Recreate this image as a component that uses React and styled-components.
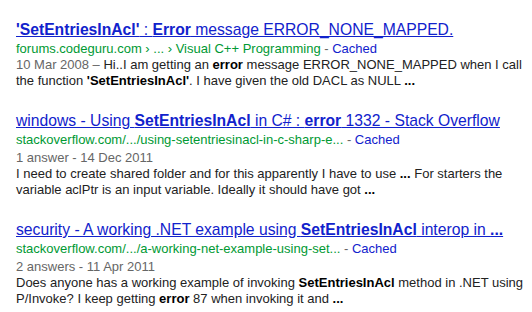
import styled, { createGlobalStyle } from "styled-components";

const GlobalStyle = createGlobalStyle`
    body {
        margin: 0;
        background: #ffffff;
        font-family: "Liberation Sans", Arial, sans-serif;
    }
`

const results = [
    {
        title: [["'SetEntriesInAcl'", true], [" : ", false], ["Error", true], [" message ERROR_NONE_MAPPED.", false]],
        url: "forums.codeguru.com › ... › Visual C++ Programming",
        date: "10 Mar 2008 – ",
        lines: [
            [["Hi..I am getting an ", false], ["error", true], [" message ERROR_NONE_MAPPED when I call", false]],
            [["the function ", false], ["'SetEntriesInAcl'", true], [". I have given the old DACL as NULL ", false], ["...", true]],
        ],
    },
    {
        title: [["windows - Using ", false], ["SetEntriesInAcl", true], [" in C# : ", false], ["error", true], [" 1332 - Stack Overflow", false]],
        url: "stackoverflow.com/.../using-setentriesinacl-in-c-sharp-e...",
        meta: "1 answer - 14 Dec 2011",
        lines: [
            [["I need to create shared folder and for this apparently I have to use ", false], ["...", true], [" For starters the", false]],
            [["variable aclPtr is an input variable. Ideally it should have got ", false], ["...", true]],
        ],
    },
    {
        title: [["security - A working .NET example using ", false], ["SetEntriesInAcl", true], [" interop in ", false], ["...", true]],
        url: "stackoverflow.com/.../a-working-net-example-using-set...",
        meta: "2 answers - 11 Apr 2011",
        lines: [
            [["Does anyone has a working example of invoking ", false], ["SetEntriesInAcl", true], [" method in .NET using", false]],
            [["P/Invoke? I keep getting ", false], ["error", true], [" 87 when invoking it and ", false], ["...", true]],
        ],
    },
]

const renderParts = (parts) =>
    parts.map(([text, bold], index) => (bold ? <b key={index}>{text}</b> : <span key={index}>{text}</span>))

const App = () => {
    return (
        <>
            <GlobalStyle />
            <ResultList>
                {
                    results.map((result, index) => (
                        <Result key={index}>
                            <Title href="#">{renderParts(result.title)}</Title>
                            <UrlLine>
                                <Url>{result.url}</Url>
                                <Separator> - </Separator>
                                <Cached href="#">Cached</Cached>
                            </UrlLine>
                            {result.meta && <Meta>{result.meta}</Meta>}
                            <Snippet>
                                {result.date && <DateText>{result.date}</DateText>}
                                {renderParts(result.lines[0])}
                                <br />
                                {renderParts(result.lines[1])}
                            </Snippet>
                        </Result>
                    ))
                }
            </ResultList>
        </>
    );
};

const ResultList = styled.ol`
    list-style: none;
    margin: 0;
    padding: 20px 0 0 16px;
    display: flex;
    flex-direction: column;
    gap: 22px;
`

const Result = styled.li`
    display: flex;
    flex-direction: column;
    white-space: nowrap;
`

const Title = styled.a`
    font-size: 15.7px;
    line-height: 20px;
    color: #1122cc;
    text-decoration: underline;
    align-self: flex-start;

    b {
        font-weight: bold;
    }
`

const UrlLine = styled.div`
    font-size: 13px;
    line-height: 17px;
`

const Url = styled.cite`
    font-style: normal;
    color: #009933;
`

const Separator = styled.span`
    color: #666666;
`

const Cached = styled.a`
    color: #1122cc;
    text-decoration: none;
`

const Meta = styled.div`
    font-size: 13px;
    line-height: 17px;
    margin-top: 1px;
    color: #666666;
`

const Snippet = styled.div`
    font-size: 13px;
    line-height: 16px;
    color: #222222;

    b {
        color: #000000;
    }
`

const DateText = styled.span`
    color: #666666;
`

export default App;
